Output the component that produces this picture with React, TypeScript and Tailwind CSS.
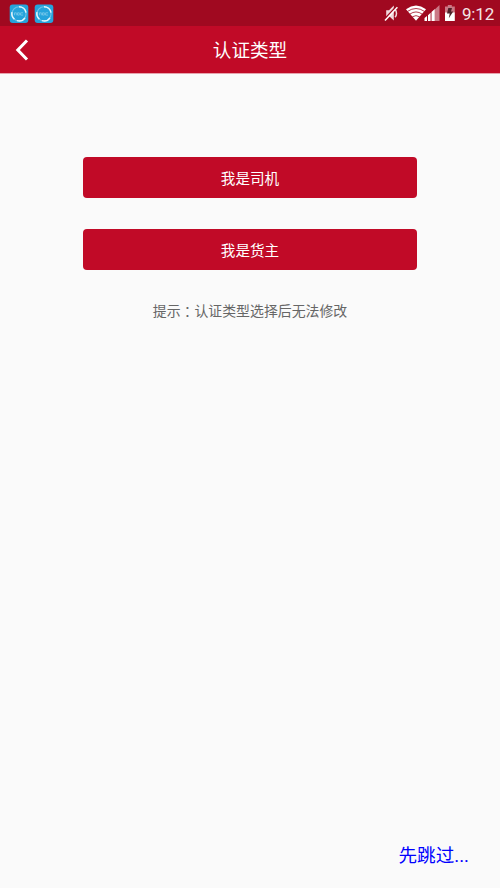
function AppBadge() {
  return (
    <svg width="20" height="20" viewBox="0 0 20 20" fill="none">
      <rect x="0.7" y="0.5" width="18.6" height="18.5" rx="3" fill="#25a3dc" />
      <circle cx="10" cy="9.8" r="7.1" stroke="#6fc3e8" strokeWidth="1.1" />
      <path d="M10 2.7a7.1 7.1 0 0 1 7 6M16 13.8a7.1 7.1 0 0 1-8 2.8M5.4 15.2a7.1 7.1 0 0 1-2.4-7" stroke="#e4f5fc" strokeWidth="1.5" />
      <path d="M5.5 11.3V8.8h1.8v2.5M8.5 8.8h1.8v2.3H8.5zM11.5 8.8h2.6M11.5 11.1h2.6M11.6 9v2" stroke="#9bd7f0" strokeWidth="0.6" />
    </svg>
  );
}

function StatusBar() {
  return (
    <div className="flex h-[26px] items-center bg-[#a00920] pl-[9px] pr-[6px] text-white">
      <div className="flex gap-[5px] pt-[1px]">
        <AppBadge />
        <AppBadge />
      </div>
      <svg className="ml-auto" width="56" height="26" viewBox="0 0 56 26" fill="none">
        <path d="M2.2 10.3H5L9.8 5.6V20.6L5.2 16.2H2.2z" fill="#f0d8dc" />
        <path d="M11 9.7c2 1.6 2 5.8 0 7.4" stroke="#f0d8dc" strokeWidth="1.5" />
        <path d="M0.4 19.2 12.8 6" stroke="#a00920" strokeWidth="1.4" />
        <path d="M1 20.4 13.4 7.2" stroke="#fff" strokeWidth="1.5" />
        <path d="M22 9.2Q32 2 42 9.2L32 20.8z" fill="#fff" />
        <path d="M23.5 11.4Q32 5.6 40.5 11.4M25.8 14.1Q32 9.8 38.2 14.1M28.3 16.8Q32 14.5 35.7 16.8" stroke="#a00920" strokeWidth="0.8" />
        <path d="M51 9.2 55.5 5v16H51z" fill="#cb7885" />
        <path d="M40.5 18 43 16V21H40.5zM44 15.2 46.6 12.8V21H44zM47.5 12 50.8 9V21h-3.3z" fill="#fff" />
      </svg>
      <svg className="ml-[4px]" width="12" height="26" viewBox="0 0 12 26">
        <path d="M3.8 5h4v1.6h3v6.4H1V6.6h2.8z" fill="#cb7885" />
        <path d="M1 12.5h9.8V21H1z" fill="#fff" />
        <path d="M4.3 8H8L7 11.5h2.2L4.8 18.2l.9-4.6H3z" fill="#4e2028" />
      </svg>
      <span className="ml-[6px] w-[32px] whitespace-nowrap pt-[1px] font-[Roboto,sans-serif] text-[17px] leading-6 tracking-[-0.2px] text-[#f4e4e7]">9:12</span>
    </div>
  );
}

function TypeButton({ label }: { label: string }) {
  return (
    <button className="h-[41px] w-full rounded-[4px] bg-[#c10a27] text-[14.6px] leading-[40px] text-white">
      {label}
    </button>
  );
}

export default function App() {
  return (
    <div className="flex h-[888px] w-[500px] flex-col overflow-hidden bg-[#fafafa] font-['Noto_Sans_CJK_SC',sans-serif]">
      <StatusBar />
      <header className="grid h-[47px] grid-cols-[60px_1fr_60px] items-center bg-[#c10a27] text-white">
        <button className="pl-[15px]" aria-label="返回">
          <svg width="14" height="22" viewBox="0 0 14 22" fill="none" stroke="#fff" strokeWidth="3">
            <path d="M12 1.5 2.8 11 12 20.5" />
          </svg>
        </button>
        <h1 className="pb-[2px] text-center text-[18.6px] leading-[45px]">认证类型</h1>
      </header>
      <main className="flex flex-1 flex-col border-t border-[#e6a3ad] px-[83px] pt-[83px]">
        <div className="flex flex-col gap-[31px]">
          <TypeButton label="我是司机" />
          <TypeButton label="我是货主" />
        </div>
        <p className="mt-[30px] whitespace-nowrap text-center text-[13.9px] leading-[21px] text-[#666]">
          提示<span className="relative top-[1px] font-['Noto_Sans_CJK_TC',sans-serif]" lang="zh-TW">：</span>认证类型选择后无法修改
        </p>
      </main>
      <footer className="flex justify-end pb-[18px] pr-[31px]">
        <a className="whitespace-nowrap text-[18.6px] leading-7 text-[#0000ff]">
          先跳过<span className="font-[Roboto,sans-serif]">...</span>
        </a>
      </footer>
    </div>
  );
}
